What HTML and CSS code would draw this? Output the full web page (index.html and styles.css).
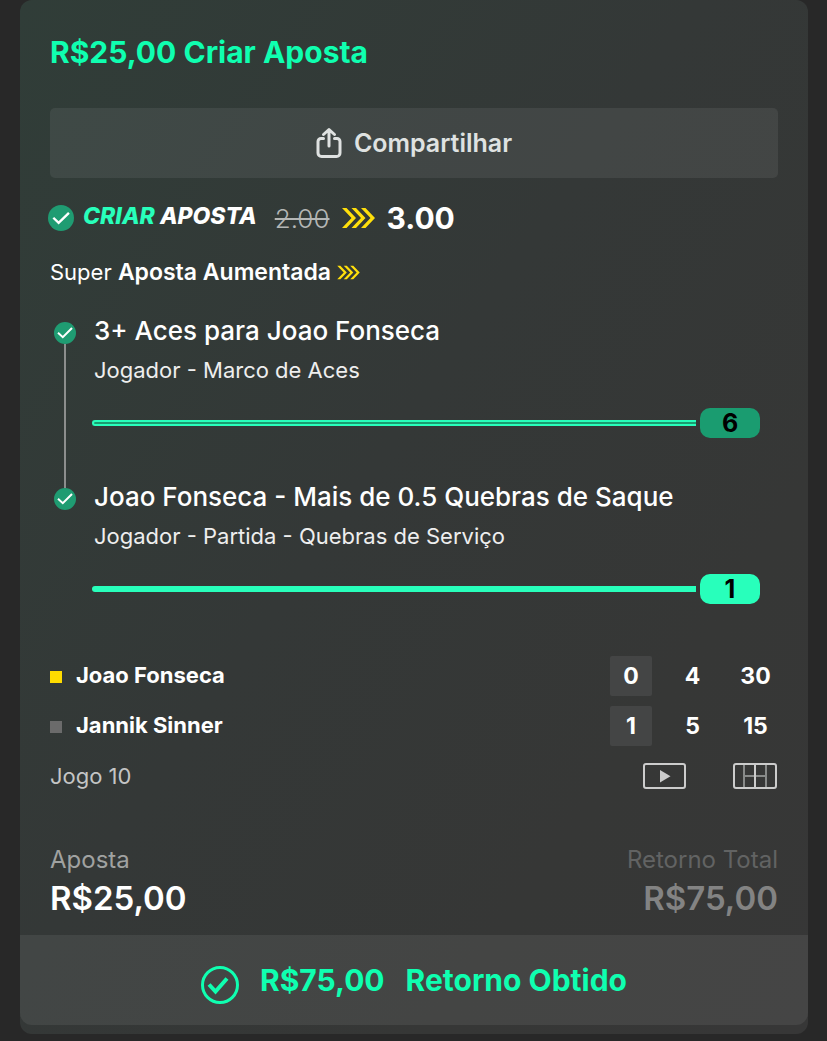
FILE: index.html
```html
<!DOCTYPE html>
<html lang="pt-BR">
<head>
  <meta charset="UTF-8">
  <meta name="viewport" content="width=device-width, initial-scale=1">
  <title>Criar Aposta</title>
  <link rel="stylesheet" href="styles.css">
</head>
<body>

  <main class="card">
    <div class="content">
      <h1>R$25,00 Criar Aposta</h1>

      <button class="share" type="button">
        <svg width="26" height="32" viewBox="0 0 26 32" fill="none" stroke="currentColor" stroke-width="3" stroke-linecap="round" stroke-linejoin="round">
          <path d="M7.500 11.500H5a3 3 0 0 0-3 3V26a3.500 3.500 0 0 0 3.500 3.500h15A3.500 3.500 0 0 0 24 26V14.500a3 3 0 0 0-3-3h-2.500"/>
          <path d="M13 19V3M7.500 7.500L13 2.500l5.500 5"/>
        </svg>
        Compartilhar
      </button>

      <div class="odds">
        <svg class="check" width="26" height="26" viewBox="0 0 22 22">
          <circle cx="11" cy="11" r="11" fill="#1f9c72"/>
          <path d="M4.500 10.800L9 15.200 17.700 6.600" fill="none" stroke="#fff" stroke-width="2"/>
        </svg>
        <span class="brand"><em>CRIAR</em> APOSTA</span>
        <s class="old">2.00</s>
        <svg width="33" height="22" viewBox="0 0 33 22" fill="#ffdf0b">
          <path d="M0 1h4.500l9.500 10-9.500 10H0l9.500-10zM9.500 1H14l9.500 10L14 21H9.500L19 11zM19 1h4.500L33 11l-9.500 10H19l9.500-10z"/>
        </svg>
        <strong class="new">3.00</strong>
      </div>

      <p class="boost">Super <b>Aposta Aumentada</b>
        <svg width="23" height="15" viewBox="0 0 33 22" fill="#ffdf0b">
          <path d="M0 1h4.500l9.500 10-9.500 10H0l9.500-10zM9.500 1H14l9.500 10L14 21H9.500L19 11zM19 1h4.500L33 11l-9.500 10H19l9.500-10z"/>
        </svg>
      </p>

      <!-- Selections -->
      <ul class="legs">
        <li class="leg">
          <div class="rail">
            <svg width="22" height="22" viewBox="0 0 22 22">
              <circle cx="11" cy="11" r="11" fill="#1f9c72"/>
              <path d="M4 10.800L8.800 15.200 18 6" fill="none" stroke="#fff" stroke-width="2"/>
            </svg>
          </div>
          <div class="info">
            <h2>3+ Aces para Joao Fonseca</h2>
            <p>Jogador - Marco de Aces</p>
            <div class="progress over">
              <span class="line"></span>
              <span class="pill">6</span>
            </div>
          </div>
        </li>
        <li class="leg">
          <div class="rail">
            <svg width="22" height="22" viewBox="0 0 22 22">
              <circle cx="11" cy="11" r="11" fill="#1f9c72"/>
              <path d="M4 10.800L8.800 15.200 18 6" fill="none" stroke="#fff" stroke-width="2"/>
            </svg>
          </div>
          <div class="info">
            <h2>Joao Fonseca - Mais de 0.5 Quebras de Saque</h2>
            <p>Jogador - Partida - Quebras de Serviço</p>
            <div class="progress">
              <span class="line"></span>
              <span class="pill">1</span>
            </div>
          </div>
        </li>
      </ul>

      <!-- Score -->
      <table class="score">
        <tr>
          <th scope="row"><span class="serve on"></span>Joao Fonseca</th>
          <td class="sets"><span>0</span></td>
          <td class="games">4</td>
          <td class="points">30</td>
        </tr>
        <tr>
          <th scope="row"><span class="serve"></span>Jannik Sinner</th>
          <td class="sets"><span>1</span></td>
          <td class="games">5</td>
          <td class="points">15</td>
        </tr>
      </table>

      <div class="match">
        <span>Jogo 10</span>
        <div class="media">
          <svg width="43" height="26" viewBox="0 0 43 26">
            <rect x="1" y="1" width="41" height="24" rx="2" fill="none" stroke="#ccc" stroke-width="2"/>
            <path d="M17 7l10.500 6.200L17 19.500z" fill="#ccc"/>
          </svg>
          <svg width="44" height="26" viewBox="0 0 44 26" fill="none" stroke-width="2">
            <path d="M11 2v22M33 2v22M11 13h22" stroke="#888a89"/>
            <path d="M22 2v22" stroke="#ccc"/>
            <rect x="1" y="1" width="42" height="24" rx="2" stroke="#ccc"/>
          </svg>
        </div>
      </div>

      <div class="totals">
        <div class="stake">
          <span>Aposta</span>
          <strong>R$25,00</strong>
        </div>
        <div class="return">
          <span>Retorno Total</span>
          <strong>R$75,00</strong>
        </div>
      </div>
    </div>

    <div class="result">
      <svg width="38" height="38" viewBox="0 0 38 38" fill="none" stroke="currentColor">
        <circle cx="19" cy="19" r="17.500" stroke-width="3"/>
        <path d="M8 18.500L14.500 25.500 26 12.500" stroke-width="4"/>
      </svg>
      <span>R$75,00</span>
      <span>Retorno Obtido</span>
    </div>
  </main>

</body>
</html>
```
FILE: styles.css
```css
* {
  box-sizing: border-box;
}
body {
  margin: 0;
  padding: 0 19px 7px 20px;
  background: #282828;
  color: #fff;
  font-family: Inter, "Liberation Sans", sans-serif;
  font-size: 22px;
}
h1, h2, p, ul {
  margin: 0;
  padding: 0;
}
svg {
  flex: none;
}
.card {
  padding-bottom: 9px;
  border-radius: 12px;
  background: linear-gradient(125deg, #303d38 0%, #343837 45%, #363736 75%, #373737 100%);
}
.content {
  padding: 30px 30px 15px;
}
h1 {
  color: #0fffb0;
  font-size: 30px;
  font-weight: 650;
  line-height: 44px;
}

.share {
  display: flex;
  align-items: center;
  justify-content: center;
  gap: 12px;
  width: 100%;
  height: 70px;
  margin: 34px 0 20px;
  border: 0;
  border-radius: 5px;
  background: rgba(255, 255, 255, 0.07);
  color: #dfe2e1;
  font: inherit;
  font-size: 25px;
  font-weight: 600;
}

.odds {
  display: flex;
  align-items: center;
  height: 40px;
  margin-left: -2px;
}
.brand {
  margin: 0 16px 4px 9px;
  font-size: 23px;
  font-style: italic;
  font-weight: 800;
}
.brand em {
  color: #28ffbb;
}
.old {
  margin-right: 10px;
  padding: 0 2px;
  color: #b4b6b5;
  font-size: 26px;
  font-weight: 300;
}
.new {
  margin-left: 12px;
  font-size: 30px;
  font-weight: 650;
}
.boost {
  margin: 18px 0 26px;
  line-height: 32px;
}
.boost b {
  font-size: 23px;
  font-weight: 600;
}

.legs {
  list-style: none;
}
.leg {
  display: flex;
  gap: 16px;
}
.rail {
  display: flex;
  flex-direction: column;
  align-items: center;
  width: 30px;
  padding-top: 8px;
}
.leg:not(:last-child) .rail::after {
  content: "";
  flex: 1;
  width: 2px;
  margin-bottom: -8px;
  background: #8c8e8d;
}
.info {
  flex: 1;
  height: 166px;
}
.leg:last-child .info {
  height: auto;
}
.info h2 {
  font-size: 26px;
  font-weight: 550;
  line-height: 34px;
}
.info p {
  margin: 8px 0 24px;
  color: #eee;
  line-height: 28px;
}
.info h2, .info p {
  margin-left: -2px;
}
.progress {
  display: flex;
  align-items: center;
  gap: 4px;
  margin: 0 18px 0 -4px;
}
.line {
  flex: 1;
  height: 6px;
  border-radius: 3px 0 0 3px;
  background: #28ffbb;
}
.over .line {
  border: 2px solid #28ffbb;
  border-right: 0;
  background: #1a9c70;
}
.pill {
  width: 60px;
  border-radius: 10px;
  background: #28ffbb;
  color: #000;
  font-size: 25px;
  font-weight: 700;
  line-height: 30px;
  text-align: center;
}
.over .pill {
  background: #1a9c70;
}

.score {
  width: 100%;
  margin-top: 42px;
  border-spacing: 0 10px;
  font-weight: 700;
}
.score th, .score td {
  height: 40px;
  padding: 0;
}
.score th {
  font-weight: 700;
  line-height: 38px;
  text-align: left;
  vertical-align: top;
}
.score td {
  font-size: 23px;
  line-height: 40px;
  text-align: center;
}
.serve {
  display: inline-block;
  width: 12px;
  height: 12px;
  margin-right: 14px;
  background: #6b6b6b;
}
.serve.on {
  background: #ffdc00;
}
.sets {
  width: 42px;
}
.sets span {
  display: block;
  border-radius: 2px;
  background: #444545;
}
.games {
  width: 81px;
}
.points {
  width: 45px;
}

.match {
  display: flex;
  align-items: center;
  justify-content: space-between;
  height: 40px;
  color: #c4c5c5;
}
.media {
  display: flex;
  gap: 47px;
  margin-right: 1px;
}

.totals {
  display: flex;
  justify-content: space-between;
  margin-top: 48px;
}
.totals span, .totals strong {
  display: block;
}
.totals span {
  color: #a0a2a1;
  font-size: 24px;
  line-height: 32px;
}
.totals strong {
  font-size: 33px;
  font-weight: 600;
  line-height: 44px;
}
.totals .return {
  text-align: right;
}
.totals .return span {
  color: #626363;
}
.totals .return strong {
  color: #838383;
}

.result {
  display: flex;
  align-items: center;
  justify-content: center;
  gap: 21px;
  height: 90px;
  border-radius: 0 0 12px 12px;
  background: rgba(255, 255, 255, 0.07);
  color: #0fffb0;
  font-size: 30px;
  font-weight: 650;
}
.result svg {
  margin-top: 10px;
}
.result span {
  line-height: 40px;
}
```
